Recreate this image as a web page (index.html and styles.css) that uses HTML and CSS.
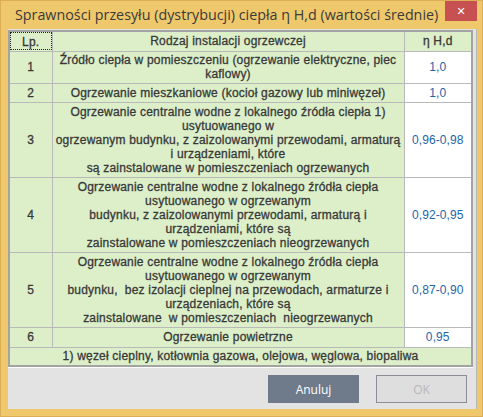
FILE: index.html
```html
<!DOCTYPE html>
<html>
<head>
<meta charset="utf-8">
<link rel="stylesheet" href="styles.css">
</head>
<body>
<div class="window">
  <div class="titlebar">
    <div class="title">Sprawności przesyłu (dystrybucji) ciepła η H,d (wartości średnie)</div>
    <div class="close">✕</div>
  </div>
  <div class="content">
    <table class="grid">
      <colgroup><col class="c1"><col class="c2"><col class="c3"></colgroup>
      <tr class="h20 head">
        <th><span class="focus">Lp.</span></th>
        <th>Rodzaj instalacji ogrzewczej</th>
        <th>η H,d</th>
      </tr>
      <tr class="h32">
        <td class="lp">1</td>
        <td class="desc">Źródło ciepła w pomieszczeniu (ogrzewanie elektryczne, piec<br>kaflowy)</td>
        <td class="val">1,0</td>
      </tr>
      <tr class="h19">
        <td class="lp">2</td>
        <td class="desc">Ogrzewanie mieszkaniowe (kocioł gazowy lub miniwęzeł)</td>
        <td class="val">1,0</td>
      </tr>
      <tr class="h75">
        <td class="lp">3</td>
        <td class="desc">Ogrzewanie centralne wodne z lokalnego źródła ciepła 1)<br>usytuowanego w<br>ogrzewanym budynku, z zaizolowanymi przewodami, armaturą<br>i urządzeniami, które<br>są zainstalowane w pomieszczeniach ogrzewanych</td>
        <td class="val">0,96-0,98</td>
      </tr>
      <tr class="h75">
        <td class="lp">4</td>
        <td class="desc">Ogrzewanie centralne wodne z lokalnego źródła ciepła<br>usytuowanego w ogrzewanym<br>budynku, z zaizolowanymi przewodami, armaturą i<br>urządzeniami, które są<br>zainstalowane w pomieszczeniach nieogrzewanych</td>
        <td class="val">0,92-0,95</td>
      </tr>
      <tr class="h75">
        <td class="lp">5</td>
        <td class="desc">Ogrzewanie centralne wodne z lokalnego źródła ciepła<br>usytuowanego w ogrzewanym<br>budynku,&nbsp; bez izolacji cieplnej na przewodach, armaturze i<br>urządzeniach, które są<br>zainstalowane&nbsp; w pomieszczeniach&nbsp; nieogrzewanych</td>
        <td class="val">0,87-0,90</td>
      </tr>
      <tr class="h20">
        <td class="lp">6</td>
        <td class="desc">Ogrzewanie powietrzne</td>
        <td class="val">0,95</td>
      </tr>
      <tr class="h19">
        <td class="desc" colspan="3">1) węzeł cieplny, kotłownia gazowa, olejowa, węglowa, biopaliwa</td>
      </tr>
    </table>
    <div class="buttons">
      <div class="btn primary">Anuluj</div>
      <div class="btn disabled">OK</div>
    </div>
  </div>
</div>
</body>
</html>
```

FILE: styles.css
```css
* { box-sizing: border-box; }
html, body { margin: 0; padding: 0; }
body { width: 483px; height: 417px; overflow: hidden; background: #f0c86c; }
.window {
  width: 483px; height: 417px;
  background: #f0c86c;
  border: 1px solid #dcae55;
  display: flex; flex-direction: column;
}
.titlebar {
  height: 28px;
  display: flex; align-items: flex-start;
  position: relative;
}
.title {
  font-family: "Open Sans", "Noto Sans", sans-serif;
  font-size: 14.3px;
  color: #3a3a3a;
  padding: 4px 0 0 14px;
  white-space: nowrap;
}
.close {
  position: absolute; right: 5px; top: 0;
  width: 32px; height: 20px;
  background: #c75050;
  color: #fff;
  font-family: "DejaVu Sans", sans-serif;
  font-size: 11px; font-weight: bold;
  display: flex; align-items: center; justify-content: center;
}
.content {
  margin: 0 5px 7px 6px;
  flex: 1;
  background: #e3e3e3;
  border-left: 1px solid #c9c9c9;
  border-right: 1px solid #b8b8b8;
  display: flex; flex-direction: column;
}
.grid {
  border-collapse: collapse;
  width: 465px;
  margin: 1px 0 0 0;
  border: 2px solid #a3a3a3;
  font-family: "Liberation Sans", Arial, sans-serif;
  font-size: 12px;
  letter-spacing: 0.2px;
  color: #383838;
  table-layout: fixed;
  box-shadow: 0 1px 0 #ffffff;
}
.c1 { width: 43px; }
.c2 { width: 352px; }
.c3 { width: 68px; }
.grid th, .grid td {
  border: 1px solid #b9b9b9;
  padding: 0;
  text-align: center;
  vertical-align: middle;
  background: #dcefc9;
  line-height: 14px;
  font-weight: normal;
  -webkit-text-stroke: 0.3px #383838;
}
.h20 { height: 20px; }
.h32 { height: 32px; }
.h19 { height: 19px; }
.h75 { height: 75px; }
.grid th:first-child, .grid td:first-child { border-left: none; }
.grid td.val {
  background: #ffffff;
  color: #1e64ab;
  letter-spacing: 0.1px;
  -webkit-text-stroke: 0;
}
.focus {
  display: block;
  height: 18px;
  line-height: 18px;
  border: 1px dotted #222;
}
.buttons {
  flex: 1;
  display: flex; justify-content: flex-end; align-items: flex-start;
  gap: 17px;
  padding: 8px 9px 0 0;
}
.btn {
  width: 91px; height: 28px;
  display: flex; align-items: center; justify-content: center;
  font-family: "Open Sans", "Noto Sans", sans-serif;
  font-size: 12px;
}
.primary { background: #6f7a8b; color: #ffffff; }
.disabled { background: #dedede; border: 1px solid #8b8e99; color: #b8b8b8; }
```
